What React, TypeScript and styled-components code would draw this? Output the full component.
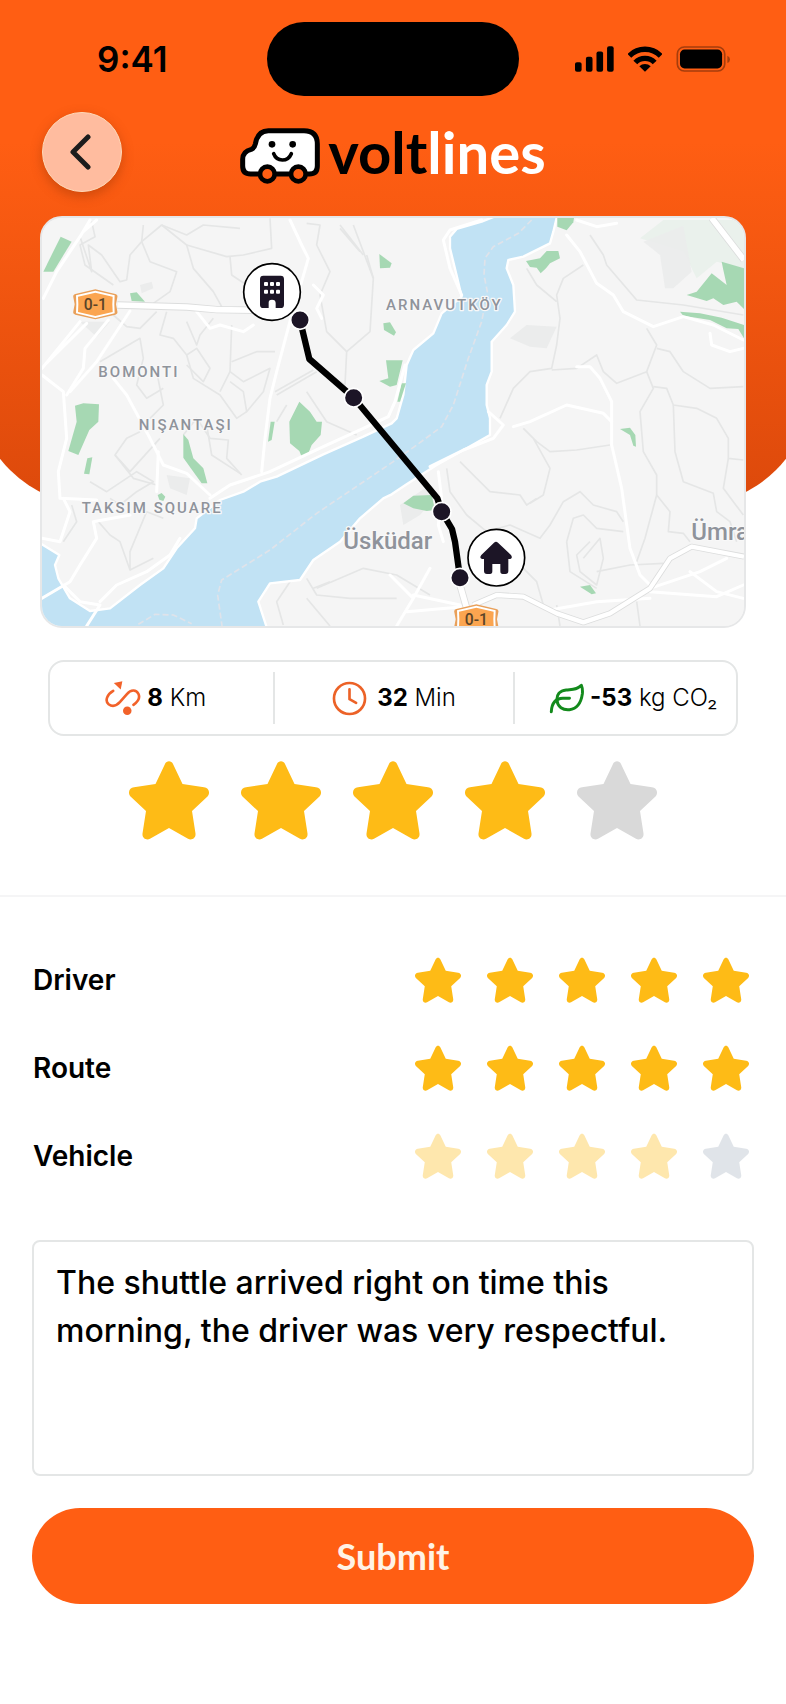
import React, { useState } from "react";
import styled, { createGlobalStyle } from "styled-components";

const ORANGE = "#ff5e13";
const INK = "#1c1526";
const UI_FONT = `Inter, "Liberation Sans", sans-serif`;
const BRAND_FONT = `Lato, "Open Sans", sans-serif`;

const GlobalStyle = createGlobalStyle`
  *, *::before, *::after { box-sizing: border-box; }
  body { margin: 0; background: #fff; color: #000; font-family: ${UI_FONT}; }
  svg { display: block; }
`;

const Screen = styled.main`
  overflow: hidden;
  padding-bottom: 100px;
`;

/* Hero: the backdrop and the content share one grid cell */
const Hero = styled.header`
  display: grid;
  grid-template-columns: minmax(0, 1fr);
`;

const Backdrop = styled.div`
  grid-area: 1 / 1;
  margin: 0 -26px 122px;
  border-radius: 0 0 123px 123px;
  background: linear-gradient(${ORANGE} 28%, #dc490b 100%);
`;

const HeroContent = styled.div`
  grid-area: 1 / 1;
  display: flex;
  flex-direction: column;
`;

const StatusBar = styled.div`
  display: grid;
  grid-template-columns: 1fr auto 1fr;
  align-items: center;
  padding: 22px 55px 0 97px;
`;

const Clock = styled.time`
  font-size: 35px;
  line-height: 40px;
  font-weight: 600;
`;

const Island = styled.div`
  width: 252px;
  height: 74px;
  margin-right: 42px;
  border-radius: 37px;
  background: #000;
`;

const StatusIcons = styled.div`
  display: flex;
  justify-content: flex-end;
  gap: 14px;
`;

const NavBar = styled.div`
  display: grid;
  grid-template-columns: 1fr auto 1fr;
  align-items: center;
  padding: 16px 42px 0;
`;

const BackButton = styled.button`
  display: grid;
  place-items: center;
  width: 80px;
  height: 80px;
  padding: 0;
  border: 1px solid #ffd9b8;
  border-radius: 50%;
  background: #ffbc9f;
  box-shadow: 0 4px 12px rgba(120, 40, 0, 0.35);
  cursor: pointer;
`;

const Logo = styled.div`
  display: flex;
  align-items: flex-start;
  gap: 8px;
  padding-top: 8px;
`;

const Wordmark = styled.span`
  font-family: ${BRAND_FONT};
  font-size: 58px;
  line-height: 48px;
  font-weight: 700;
`;

const WordmarkTail = styled.span`
  color: #fff;
`;

const MapCard = styled.section`
  margin: 24px 40px 0;
  border: 2px solid #e6e7e8;
  border-radius: 22px;
  overflow: hidden;
  background: #f5f5f5;
`;

const MapDrawing = styled.svg`
  width: 100%;
  height: auto;
`;

const Stats = styled.ul`
  display: grid;
  grid-template-columns: 14fr 15fr 14fr;
  margin: 32px 48px 0;
  padding: 10px 0;
  border: 2px solid #e4e6e6;
  border-radius: 16px;
  list-style: none;
`;

const Stat = styled.li<{ $gap: number; $before?: number; $after?: number }>`
  display: flex;
  align-items: center;
  justify-content: center;
  gap: ${(p) => p.$gap}px;
  height: 52px;
  padding: 0 ${(p) => p.$after ?? 0}px 0 ${(p) => p.$before ?? 0}px;
  font-size: 24px;
  line-height: 32px;
  font-weight: 300;
  white-space: nowrap;

  & + & {
    border-left: 2px solid #e4e6e6;
  }
`;

const StatValue = styled.strong`
  font-weight: 700;
`;

const StarGroup = styled.fieldset<{ $gap: number; $faded?: boolean }>`
  display: flex;
  justify-content: center;
  gap: ${(p) => p.$gap}px;
  min-width: 0;
  margin: 0;
  padding: 0;
  border: 0;
  opacity: ${(p) => (p.$faded ? 0.35 : 1)};
`;

const StarLabel = styled.label<{ $size: number }>`
  display: grid;
  width: ${(p) => p.$size}px;
  height: ${(p) => p.$size}px;
  cursor: pointer;

  & > * {
    grid-area: 1 / 1;
    width: 100%;
    height: 100%;
  }
`;

const StarInput = styled.input`
  appearance: none;
  margin: 0;
  border-radius: 8px;
`;

const Overall = styled.section`
  padding: 24px 32px 55px;
  border-bottom: 2px solid #f5f5f6;
`;

const Form = styled.form`
  display: flex;
  flex-direction: column;
  padding: 60px 32px 0;
`;

const Criteria = styled.div`
  display: flex;
  flex-direction: column;
  gap: 42px;
  padding: 0 5px 0 1px;
`;

const Criterion = styled.div`
  display: flex;
  align-items: center;
  justify-content: space-between;
`;

const CriterionName = styled.span`
  font-size: 28px;
  line-height: 40px;
  font-weight: 600;
`;

const Comment = styled.textarea`
  width: 100%;
  margin: 61px 0 32px;
  padding: 17px 22px 23px;
  border: 2px solid #e4e6e6;
  border-radius: 8px;
  background: #fff;
  color: #000;
  font-family: ${UI_FONT};
  font-size: 32px;
  line-height: 48px;
  font-weight: 500;
  resize: none;
`;

const SubmitButton = styled.button`
  height: 96px;
  padding: 0 32px;
  border: 0;
  border-radius: 48px;
  background: ${ORANGE};
  color: #fff3e6;
  font-family: ${BRAND_FONT};
  font-size: 36px;
  line-height: 48px;
  font-weight: 700;
  cursor: pointer;
`;

const STAR_PATH =
  "M36 3C37.500-.7 42.500-.7 44 3L53.500 23L75 26.300C80 27 81.500 32 78.500 35.500L63 50L66.500 72.500C67 77.500 62.500 79.500 59 77.800L40 67L21 77.800C17.500 79.500 13 77.500 13.500 72.500L17 50L1.500 35.500C-1.500 32 0 27 5 26.300L26.500 23Z";

type RatingProps = {
  name: string;
  label: string;
  initial: number;
  size: number;
  gap: number;
  emptyColor?: string;
  faded?: boolean;
};

function Rating({ name, label, initial, size, gap, emptyColor = "#d9d9d9", faded }: RatingProps) {
  const [value, setValue] = useState(initial);
  return (
    <StarGroup $gap={gap} $faded={faded} aria-label={label}>
      {[1, 2, 3, 4, 5].map((n) => (
        <StarLabel key={n} $size={size}>
          <StarInput
            type="radio"
            name={name}
            value={n}
            checked={value === n}
            onChange={() => setValue(n)}
            aria-label={`${n} of 5`}
          />
          <svg viewBox="0 -1 80 80" fill={n <= value ? "#febb16" : emptyColor} aria-hidden="true">
            <path d={STAR_PATH} />
          </svg>
        </StarLabel>
      ))}
    </StarGroup>
  );
}

function SignalIcon() {
  return (
    <svg width="39" height="26" viewBox="43 48 118 77" aria-hidden="true">
      <rect x="43" y="96" width="20" height="29" rx="6" />
      <rect x="76" y="80" width="20" height="45" rx="6" />
      <rect x="108" y="64" width="20" height="61" rx="6" />
      <rect x="140" y="48" width="20" height="77" rx="6" />
    </svg>
  );
}

function WifiIcon() {
  return (
    <svg width="34" height="26" viewBox="202 48 102 77" aria-hidden="true">
      <g fill="none" stroke="#000" strokeWidth="16">
        <path d="M206 77A66 66 0 0 1 300 77" />
        <path d="M224 97A40 40 0 0 1 282 97" />
      </g>
      <path d="M253 125L236 108A25 25 0 0 1 270 108Z" />
    </svg>
  );
}

function BatteryIcon() {
  return (
    <svg width="55" height="26" viewBox="347 47 165 79" aria-hidden="true">
      <rect x="350" y="50" width="144" height="73" rx="21" fill="none" stroke="#a63d0c" strokeWidth="5" />
      <rect x="358" y="58" width="128" height="57" rx="14" />
      <path d="M502 77Q510 81 510 88T502 99Z" fill="#a63d0c" />
    </svg>
  );
}

function CarIcon() {
  return (
    <svg width="80" height="56" viewBox="60 54 240 168" aria-hidden="true">
      <path
        d="M92 192Q68 192 68 168V148Q68 124 94 118Q103 115 106 102Q113 62 145 62H252Q292 62 292 102V168Q292 192 268 192Z"
        fill="#fff"
        stroke="#000"
        strokeWidth="15"
      />
      <g fill={ORANGE} stroke="#000" strokeWidth="14">
        <circle cx="142" cy="192" r="22" />
        <circle cx="235" cy="192" r="22" />
      </g>
      <circle cx="156" cy="103" r="10" />
      <circle cx="218" cy="103" r="10" />
      <path
        d="M161 131Q168 150 187 150T214 131"
        fill="none"
        stroke="#000"
        strokeWidth="11"
        strokeLinecap="round"
      />
    </svg>
  );
}

function DistanceIcon() {
  return (
    <svg width="36" height="36" viewBox="190 88 110 110" fill="#f2622a" aria-hidden="true">
      <path
        d="M215 121C196 132 189 152 201 162C213 171 225 167 236 155L257 131C269 117 285 116 292 130C299 145 290 155 277 164"
        fill="none"
        stroke="#f2622a"
        strokeWidth="8"
        strokeLinecap="round"
      />
      <path d="M217 97L243 92L238 117Z" />
      <circle cx="258" cy="182" r="13" />
    </svg>
  );
}

function DurationIcon() {
  return (
    <svg width="35" height="35" viewBox="877 91 106 106" fill="none" stroke="#ec6227" strokeWidth="8" strokeLinecap="round" aria-hidden="true">
      <circle cx="930" cy="144" r="47" />
      <path d="M930 116V146L950 157" strokeLinejoin="round" />
    </svg>
  );
}

function LeafIcon() {
  return (
    <svg width="35" height="31" viewBox="476 98 106 92" fill="none" stroke="#138a1c" strokeWidth="9" strokeLinecap="round" strokeLinejoin="round" aria-hidden="true">
      <path d="M574 104C560 118 547 116 528 118C508 120 499 133 500 149C502 170 518 180 538 178C561 175 573 158 577 130C578 120 577 111 574 104Z" />
      <path d="M538 143H518C495 144 484 160 483 184" />
    </svg>
  );
}

function RoadShield({ x, y }: { x: number; y: number }) {
  return (
    <g transform={`translate(${x} ${y})`}>
      <path d="M6 14L66 0L126 14Q134 16 132 24L128 45L132 66Q134 74 126 76L66 90L6 76Q-2 74 0 66L4 45L0 24Q-2 16 6 14Z" fill="#e9a05a" />
      <path d="M8 18L66 4L124 18L123 45L124 72L66 86L8 72L9 45Z" fill="#fff" />
      <path d="M14 22L66 10L118 22L117 45L118 68L66 80L14 68L15 45Z" fill="#fba550" />
      <text x="66" y="61" textAnchor="middle" fontSize="47" fontWeight="500" fill="#5a4428">
        0-1
      </text>
    </g>
  );
}

const minorRoads = [
  "M150 95L185 200L175 120L215 150L270 230L290 225L300 150L335 110L340 60",
  "M185 50L195 95L150 120L165 180L250 240",
  "M335 110L395 60L470 90L520 60L630 70",
  "M335 110L360 170L440 200L420 260L370 295",
  "M395 60L470 120L490 190L550 260L575 305",
  "M470 120L590 155L640 150L725 130L720 40",
  "M600 155L605 210L650 240",
  "M250 330L290 365L330 370L380 320",
  "M210 470L330 400L340 460L320 540L350 580L400 550",
  "M410 320L390 390L430 400L470 450L500 430L540 490L520 530L470 480",
  "M470 350L500 420L510 390L550 340",
  "M470 450L490 520L570 570L620 640L650 620",
  "M605 360L600 500L570 560M605 470L680 440L735 440",
  "M600 500L640 530L720 490L700 560L650 620L640 560L600 530",
  "M380 500L400 600L360 640M330 680L290 700L255 750L300 800L390 700",
  "M255 750L310 820L380 840M460 690L500 640L540 700L595 705L590 760L635 810",
  "M530 660L545 750L630 805",
  "M180 830L230 860L320 800L370 830L320 860L270 900L240 880",
  "M205 950L240 990L270 1010L300 1095L300 1040L350 920L400 940",
  "M125 900L140 950L100 1010M370 1060L300 1095",
  "M830 55L870 60L860 120L900 200L870 270L890 380L950 440L1020 380L1030 220L970 60",
  "M930 70L990 140M930 60L1000 150M1030 220L1010 150M950 440L945 540L850 480",
  "M740 570L860 500M735 560L850 495M830 560L890 650L980 690M770 600L740 650",
  "M1680 90L1720 150L1730 180L1820 285L1960 300L2140 330",
  "M1660 180L1600 220L1580 270L1590 340L1580 420L1565 490L1500 500L1450 550L1410 640",
  "M1490 190L1520 240L1580 290M1565 495L1640 490L1700 450L1720 500L1760 535L1850 500L1880 420L1850 370",
  "M1880 430L1920 440L1960 500L2040 550L2140 545",
  "M1850 500L1870 550L1830 620L1840 740L1880 810L1880 870L1845 1000L1820 1070",
  "M1870 545L1910 550L1930 600L2000 610L2060 640L2095 700L2095 760L2140 765",
  "M1930 600L1935 740L1960 830L2050 865L2060 920L2100 950L2120 1010",
  "M2095 760L2080 850L2110 890L2140 930M1880 870L1920 920L1915 980L1960 985L1980 1010",
  "M1480 670L1520 710L1560 740L1640 735L1740 720M1510 700L1560 790L1540 870L1500 895",
  "M1290 770L1340 820L1380 860L1470 870L1490 900L1520 880",
  "M1250 790L1260 860L1310 930L1370 980L1440 960L1530 1000L1560 960L1600 890L1650 860L1690 900L1760 920L1780 950",
  "M1610 1010L1630 940L1660 930L1700 970L1780 980M1610 1010L1620 1100L1700 1150M1660 1060L1710 1000L1720 1060L1700 1140L1650 1100L1640 1050L1680 1010",
  "M1700 1100L1800 1080L1900 1075M1430 980L1450 1060L1520 1130L1540 1200M1580 1200L1590 1263M1820 1190L1830 1263",
  "M850 1150L900 1130M830 1120L860 1170L960 1180L1100 1180M780 1130L740 1190L760 1260M830 1180L900 1263",
  "M860 1150L1000 1090L1100 1110L1200 1170",
];

const mainRoads = [
  "M180 45L150 95L80 200L40 280M200 45L160 80",
  "M150 350L36 490M170 355L44 480",
  "M235 345L165 430L160 490L110 570",
  "M36 510L100 560L110 700L85 800L90 880L200 885",
  "M300 318L200 470L120 560",
  "M250 520L290 570L360 700L400 780L470 805L540 870",
  "M385 740L380 860M100 880L120 920L90 1010L36 1000",
  "M780 45L815 120L835 160L815 230L785 330L740 500L720 580L705 700L695 800",
  "M850 240L880 270L860 310L875 340",
  "M500 320L540 370L570 360L640 380L670 360",
  "M1355 45L1260 75L1240 105L1260 190L1295 270",
  "M1610 90L1650 140L1700 235L1750 270L1780 320L1870 365L1960 335L2050 360L2140 405",
  "M1640 45L1700 65L1760 55",
  "M1450 665L1500 650L1610 600L1720 625L1745 650",
  "M1640 485L1680 485L1710 520L1745 590L1745 720L1775 850L1800 1030L1830 1110L1860 1140",
  "M2040 385L2045 420L2100 440L2140 430",
  "M1225 800L1235 880L1225 960L1240 1010",
  "M36 1180L120 1130L150 1080L200 1000L190 950L300 930",
  "M100 1140L150 1190L210 1200L170 1263",
  "M210 1190L260 1140L350 1100L420 1050L450 1000",
  "M1080 1110L1150 1180L1100 1263M1150 1180L1200 1090M1150 1170L1290 1200M1130 1220L1300 1205",
  "M1560 1215L1700 1190L1860 1180M1860 1150L2010 1100L2090 1060M1980 1100L2060 1160L2140 1180M1860 1160L2060 1175L2140 1140",
];

const parks = [
  "M92 95L125 110L70 200L40 200Z",
  "M300 265L320 262L345 290L305 288Z",
  "M135 602L160 595L207 598L205 650L178 675L145 750L115 738L140 650Z",
  "M172 760L187 757L178 808L162 806Z",
  "M460 688L475 705L490 760L520 790L532 835L515 835L490 800L460 758Z",
  "M808 590L840 620L860 650L876 650L872 690L845 720L833 750L815 755L808 738L780 715L778 650Z",
  "M722 650L734 650L725 705L714 710Z",
  "M383 870L395 864L406 875L400 888L388 884Z",
  "M1048 147L1085 175L1080 188L1050 190Z",
  "M1060 355L1080 352L1098 382L1092 392L1062 375Z",
  "M1068 466L1118 466L1100 540L1080 545L1048 528L1075 520Z",
  "M1115 535L1128 535L1110 590L1102 590Z",
  "M1582 39L1632 39L1630 52L1610 76L1582 65Z",
  "M1488 168L1530 160L1550 138L1585 138L1590 160L1560 175L1548 190L1532 205L1520 188L1500 186Z",
  "M1970 270L2000 260L2045 205L2090 240L2080 195L2075 170L2142 190L2142 312L2120 290L2080 300L2050 280L2030 288Z",
  "M1950 320L2010 325L2075 338L2142 360L2142 400L2125 372L2090 370L2040 345L1960 332Z",
  "M1770 672L1800 668L1816 690L1818 725L1810 722L1800 690Z",
  "M1120 895L1150 872L1205 870L1215 915L1190 918L1150 910Z",
  "M1650 1145L1680 1140L1698 1165L1685 1168Z",
];

const stops: [number, number][] = [
  [810, 345],
  [971, 578],
  [1235, 920],
  [1290, 1118],
];

const districts: [number, number, string][] = [
  [205, 517, "BOMONTI"],
  [326, 675, "NIŞANTAŞI"],
  [155, 923, "TAKSIM SQUARE"],
  [1068, 316, "ARNAVUTKÖY"],
];

function RouteMap() {
  return (
    <MapDrawing viewBox="36 39 2106 1224" role="img" aria-label="Shuttle route map" fontFamily="Roboto, sans-serif">
      <rect x="36" y="39" width="2106" height="1224" fill="#f5f5f5" />
      <g fill="#ebecec">
        <path d="M1900 45L2142 45V190L2060 170L2000 220L1960 140L1830 100Z" fill="#eaf1ec" />
        <path d="M1840 110L1960 62L1972 130L1985 200L1930 250H1905L1890 150Z" opacity=".9" />
        <path d="M1440 400L1490 360L1580 365L1550 430L1500 425Z" />
        <path d="M1110 900L1200 840L1220 870L1170 930L1120 960Z" />
        <path d="M150 350H240L200 395ZM330 240L365 230L370 250L335 265ZM410 810L480 820L470 870L420 850Z" />
      </g>
      <g fill="none" stroke="#e5e6e6" strokeWidth="5" strokeLinejoin="round">
        {minorRoads.map((d) => (
          <path key={d} d={d} />
        ))}
      </g>
      <path
        d="M1405 30L1355 50L1280 72L1260 95V130L1282 220L1295 275L1235 325L1210 385L1150 435L1130 480L1120 570L1100 640L1085 655L1000 695L880 748L740 815L690 830L640 860L570 885L500 940L495 970L440 1030L400 1090L330 1140L240 1210L180 1218L120 1180L85 1120L75 1080L88 1050L26 1012V1273H712L685 1190L720 1135L810 1125L850 1065L930 1010L990 940L1060 880L1085 868L1130 838L1220 780L1310 730L1380 690V640L1370 600V540L1385 500V410L1430 360L1455 320L1450 240L1430 190L1435 165L1480 155L1560 115L1570 80L1582 30Z"
        fill="#c1e2f4"
        stroke="#fff"
        strokeWidth="7"
        strokeLinejoin="round"
      />
      <g fill="#a6d8b3">
        {parks.map((d) => (
          <path key={d} d={d} />
        ))}
      </g>
      <g fill="none" stroke="#fff" strokeWidth="9" strokeLinejoin="round" strokeLinecap="round">
        {mainRoads.map((d) => (
          <path key={d} d={d} />
        ))}
        <path d="M540 880L600 840L720 800L880 725L1000 670L1075 635L1095 590L1125 480" />
        <path d="M1200 785L1300 735L1390 700L1420 660L1375 620" />
      </g>
      <g fill="none" strokeLinejoin="round">
        <g stroke="#dcdddd" strokeWidth="22">
          <path d="M262 300L470 306L560 314L700 316" />
          <path d="M2045 39L2142 165M1290 1140L1310 1210" />
          <path d="M1330 1200L1400 1170L1480 1175L1580 1225L1660 1252L1740 1225L1860 1150L1920 1060L1985 1025L2142 1055" strokeWidth="18" />
        </g>
        <g stroke="#fff" strokeWidth="17">
          <path d="M262 300L470 306L560 314L700 316" />
          <path d="M2045 39L2142 165M1290 1140L1310 1210" />
          <path d="M1330 1200L1400 1170L1480 1175L1580 1225L1660 1252L1740 1225L1860 1150L1920 1060L1985 1025L2142 1055" strokeWidth="13" />
        </g>
      </g>
      <g fill="none" stroke="#dfe3ea" strokeWidth="5" strokeDasharray="18 9">
        <path d="M1505 45L1465 85L1390 125L1365 160L1362 210L1372 260L1355 350L1315 460L1270 600L1235 665L1160 720L1090 770L860 925L720 1035L575 1125L563 1170L576 1263" />
        <path d="M325 1258L375 1228L430 1230L485 1256" />
      </g>

      <g fill="#8f939b" stroke="#f8f8f8" strokeWidth="8" paintOrder="stroke" strokeLinejoin="round">
        <g fontSize="45" fontWeight="500" letterSpacing="6">
          {districts.map(([x, y, name]) => (
            <text key={name} x={x} y={y}>
              {name}
            </text>
          ))}
        </g>
        <g fontSize="72" fontWeight="500">
          <text x="940" y="1031">Üsküdar</text>
          <text x="1984" y="1005">Ümra</text>
        </g>
      </g>

      <RoadShield x={130} y={253} />
      <RoadShield x={1273} y={1198} />

      <path
        d="M810 345L838 462L971 578L1222 880L1235 920L1266 972L1275 1010L1290 1118"
        fill="none"
        stroke="#000"
        strokeWidth="19"
        strokeLinejoin="round"
      />
      <g fill="#fff" stroke="#000" strokeWidth="5">
        <circle cx="726" cy="261" r="85" />
        <circle cx="1399" cy="1058" r="85" />
      </g>
      <g fill={INK} stroke="#fff" strokeWidth="5">
        {stops.map(([cx, cy]) => (
          <circle key={cx} cx={cx} cy={cy} r="28" />
        ))}
      </g>
      <path
        d="M700 212H752Q762 212 762 222V299Q762 309 752 309H737V294Q737 284 726 284T716 294V309H700Q690 309 690 299V222Q690 212 700 212Z"
        fill={INK}
      />
      <g fill="#fff">
        {[702, 720, 738].map((x) => (
          <React.Fragment key={x}>
            <rect x={x} y="231" width="12" height="12" rx="3" />
            <rect x={x} y="254" width="12" height="12" rx="3" />
          </React.Fragment>
        ))}
      </g>
      <path
        d="M1392 1013Q1398 1008 1404 1013L1443 1050Q1449 1059 1441 1062H1435V1098Q1435 1107 1426 1107H1418Q1411 1107 1411 1099V1077H1387V1099Q1387 1107 1380 1107H1371Q1362 1107 1362 1098V1062H1356Q1347 1059 1354 1050Z"
        fill={INK}
      />
    </MapDrawing>
  );
}

export default function App() {
  return (
    <>
      <GlobalStyle />
      <Screen>
        <Hero>
          <Backdrop />
          <HeroContent>
            <StatusBar>
              <Clock>9:41</Clock>
              <Island />
              <StatusIcons>
                <SignalIcon />
                <WifiIcon />
                <BatteryIcon />
              </StatusIcons>
            </StatusBar>
            <NavBar>
              <BackButton type="button" aria-label="Back">
                <svg width="24" height="38" viewBox="0 0 24 38" fill="none" stroke="#1c1c1c" strokeWidth="5" strokeLinecap="round" strokeLinejoin="round" aria-hidden="true">
                  <path d="M18 4L3 19L18 34" />
                </svg>
              </BackButton>
              <Logo>
                <CarIcon />
                <Wordmark>
                  volt<WordmarkTail>lines</WordmarkTail>
                </Wordmark>
              </Logo>
            </NavBar>
            <MapCard>
              <RouteMap />
            </MapCard>
          </HeroContent>
        </Hero>

        <Stats>
          <Stat $gap={6} $after={12}>
            <DistanceIcon />
            <span>
              <StatValue>8</StatValue> Km
            </span>
          </Stat>
          <Stat $gap={10}>
            <DurationIcon />
            <span>
              <StatValue>32</StatValue> Min
            </span>
          </Stat>
          <Stat $gap={6} $before={16}>
            <LeafIcon />
            <span>
              <StatValue>-53</StatValue> kg CO₂
            </span>
          </Stat>
        </Stats>

        <Overall>
          <Rating name="overall" label="Overall rating" initial={4} size={80} gap={32} />
        </Overall>

        <Form onSubmit={(e) => e.preventDefault()}>
          <Criteria>
            <Criterion>
              <CriterionName>Driver</CriterionName>
              <Rating name="driver" label="Driver" initial={5} size={46} gap={26} />
            </Criterion>
            <Criterion>
              <CriterionName>Route</CriterionName>
              <Rating name="route" label="Route" initial={5} size={46} gap={26} />
            </Criterion>
            <Criterion>
              <CriterionName>Vehicle</CriterionName>
              <Rating name="vehicle" label="Vehicle" initial={4} size={46} gap={26} emptyColor="#a9b4c2" faded />
            </Criterion>
          </Criteria>
          <Comment
            rows={4}
            aria-label="Comment"
            defaultValue="The shuttle arrived right on time this morning, the driver was very respectful."
          />
          <SubmitButton type="submit">Submit</SubmitButton>
        </Form>
      </Screen>
    </>
  );
}
